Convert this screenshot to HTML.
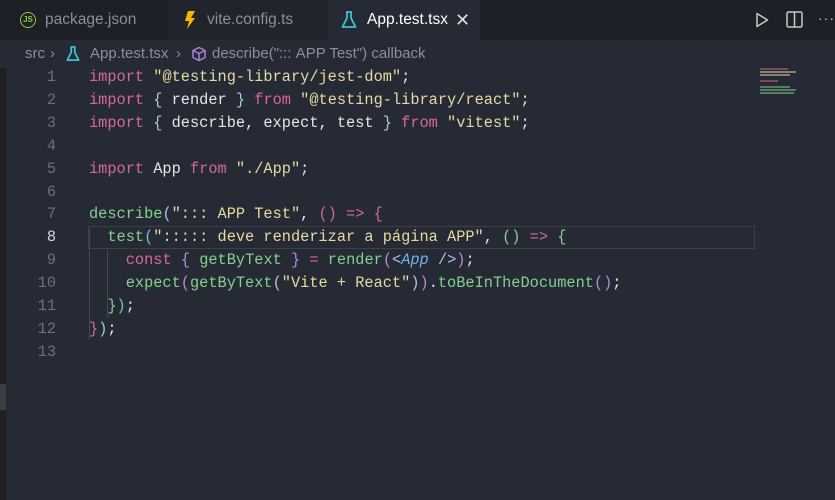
<!DOCTYPE html>
<html><head><meta charset="utf-8"><style>
*{margin:0;padding:0;box-sizing:border-box}
body{width:835px;height:500px;overflow:hidden;background:#262a35;font-family:"Liberation Sans",sans-serif;position:relative}
.tabs{position:absolute;left:0;top:0;width:835px;height:40px;background:#1d2027}
.tab{position:absolute;top:0;height:40px;color:#8b8f98;font-size:15.5px;line-height:40px}
.crumb{position:absolute;top:40px;left:0;height:28px;width:835px;color:#8b8f98;font-size:15px;line-height:28px}
.code{position:absolute;left:0;top:66px;font-family:"Liberation Mono",monospace;font-size:15.3px;line-height:22.9px;white-space:pre}
.ln{position:absolute;left:0;width:56px;text-align:right;color:#6b707b}
.ln.a{color:#d6d8dc}
.tx{position:absolute;left:89px;color:#e4e6ea}
.k{color:#d9659e}.s{color:#e3dba0}.f{color:#84d08c}.p1{color:#a9c6e0}.p2{color:#d9659e}.p3{color:#67c9c4}.p4{color:#b58ad8}.j{color:#6fb5ec;font-style:italic}.g{color:#84d08c}
</style></head><body>
<div class="tabs">
 <div class="tab" style="left:0;width:168px;background:#1d2027">
  <span style="position:absolute;left:20px;top:12px;width:16px;height:16px;border:1.5px solid #8cc84b;border-radius:50%;color:#8cc84b;font-size:8px;line-height:13px;text-align:center;font-weight:bold">JS</span>
  <span style="position:absolute;left:45px">package.json</span></div>
 <div class="tab" style="left:168px;width:160px;background:#21242b">
  <svg style="position:absolute;left:16px;top:11px" width="12" height="18" viewBox="0 0 12 18"><path d="M4 0h7L7 7h4L3 18l2-8H1z" fill="#f5b800"/></svg>
  <span style="position:absolute;left:39px">vite.config.ts</span></div>
 <div class="tab" style="left:328px;width:152px;background:#262a35;color:#fff">
  <svg style="position:absolute;left:13px;top:11px" width="16" height="18" viewBox="0 0 16 18"><path d="M5 1h6M6 1v6L1.5 16h13L10 7V1" fill="none" stroke="#3fc1d6" stroke-width="1.8" stroke-linejoin="round"/></svg>
  <span style="position:absolute;left:39px">App.test.tsx</span>
  <span style="position:absolute;left:127px;font-size:18px;color:#ddd">✕</span></div>
 <svg style="position:absolute;left:755px;top:12px" width="14" height="16" viewBox="0 0 14 16"><path d="M2 1.5v13L12.5 8z" fill="none" stroke="#c8c8c8" stroke-width="1.5" stroke-linejoin="round"/></svg>
 <svg style="position:absolute;left:786px;top:11px" width="17" height="17" viewBox="0 0 17 17"><rect x="1" y="1" width="15" height="15" rx="1.5" fill="none" stroke="#c8c8c8" stroke-width="1.5"/><path d="M8.5 1v15" stroke="#c8c8c8" stroke-width="1.5"/></svg>
 <span style="position:absolute;left:818px;top:10px;color:#c8c8c8;font-size:14px;letter-spacing:1px">···</span>
</div>
<div class="crumb">
 <span style="position:absolute;left:25px">src</span>
 <span style="position:absolute;left:50px">›</span>
 <svg style="position:absolute;left:66px;top:6px" width="14" height="16" viewBox="0 0 16 18"><path d="M5 1h6M6 1v6L1.5 16h13L10 7V1" fill="none" stroke="#3fc1d6" stroke-width="2" stroke-linejoin="round"/></svg>
 <span style="position:absolute;left:90px">App.test.tsx</span>
 <span style="position:absolute;left:176px">›</span>
 <svg style="position:absolute;left:191px;top:6px" width="16" height="16" viewBox="0 0 16 16"><path d="M8 1.5l6 3v7l-6 3-6-3v-7zM2 4.5l6 3 6-3M8 7.5v7" fill="none" stroke="#b180d7" stroke-width="1.5" stroke-linejoin="round"/></svg>
 <span style="position:absolute;left:212px">describe(":::&nbsp;APP Test") callback</span>
</div>
<div style="position:absolute;left:0;top:68px;width:6px;height:432px;background:#211f21"></div>
<div style="position:absolute;left:0;top:384px;width:6px;height:26px;background:#3a3d42"></div>
<div style="position:absolute;left:88px;top:226px;width:667px;height:23px;border:1.5px solid #3d4048"></div>
<div style="position:absolute;left:107px;top:250px;width:1px;height:68px;background:#454954"></div>
<div style="position:absolute;left:89px;top:228px;width:1px;height:112px;background:#454954"></div>
<div style="position:absolute;left:760px;top:66px;width:40px;height:30px;opacity:.5">
 <div style="height:2px;width:28px;background:#d9659e;margin-top:2px"></div>
 <div style="height:2px;width:36px;background:#e3dba0;margin-top:1px"></div>
 <div style="height:2px;width:30px;background:#e3dba0;margin-top:1px"></div>
 <div style="height:2px;width:18px;background:#d9659e;margin-top:4px"></div>
 <div style="height:2px;width:30px;background:#84d08c;margin-top:4px"></div>
 <div style="height:2px;width:36px;background:#84d08c;margin-top:1px"></div>
 <div style="height:2px;width:34px;background:#84d08c;margin-top:1px"></div>
</div>
<div class="code">
<div class="ln" style="top:0">1</div><div class="tx" style="top:0"><span class="k">import</span> <span class="s">"@testing-library/jest-dom"</span>;</div>
<div class="ln" style="top:22.9px">2</div><div class="tx" style="top:22.9px"><span class="k">import</span> <span class="p1">{</span> render <span class="p1">}</span> <span class="k">from</span> <span class="s">"@testing-library/react"</span>;</div>
<div class="ln" style="top:45.8px">3</div><div class="tx" style="top:45.8px"><span class="k">import</span> <span class="p1">{</span> describe, expect, test <span class="p1">}</span> <span class="k">from</span> <span class="s">"vitest"</span>;</div>
<div class="ln" style="top:68.7px">4</div>
<div class="ln" style="top:91.6px">5</div><div class="tx" style="top:91.6px"><span class="k">import</span> App <span class="k">from</span> <span class="s">"./App"</span>;</div>
<div class="ln" style="top:114.5px">6</div>
<div class="ln" style="top:137.4px">7</div><div class="tx" style="top:137.4px"><span class="f">describe</span><span class="p1">(</span><span class="s">"::: APP Test"</span>, <span class="p2">()</span> <span class="k">=&gt;</span> <span class="p2">{</span></div>
<div class="ln a" style="top:160.3px">8</div><div class="tx" style="top:160.3px">  <span class="f">test</span><span class="p3">(</span><span class="s">"::::: deve renderizar a página APP"</span>, <span class="g">()</span> <span class="k">=&gt;</span> <span class="g">{</span></div>
<div class="ln" style="top:183.2px">9</div><div class="tx" style="top:183.2px">    <span class="k">const</span> <span class="p4">{</span> <span class="f">getByText</span> <span class="p4">}</span> <span class="k">=</span> <span class="f">render</span><span class="p4">(</span><span class="p1">&lt;</span><span class="j">App</span> <span class="p1">/&gt;</span><span class="p4">)</span>;</div>
<div class="ln" style="top:206.1px">10</div><div class="tx" style="top:206.1px">    <span class="f">expect</span><span class="p4">(</span><span class="f">getByText</span><span class="p1">(</span><span class="s">"Vite + React"</span><span class="p1">)</span><span class="p4">)</span>.<span class="f">toBeInTheDocument</span><span class="p4">()</span>;</div>
<div class="ln" style="top:229px">11</div><div class="tx" style="top:229px">  <span class="g">}</span><span class="p3">)</span>;</div>
<div class="ln" style="top:251.9px">12</div><div class="tx" style="top:251.9px"><span class="p2">}</span><span class="p1">)</span>;</div>
<div class="ln" style="top:274.8px">13</div>
</div>
</body></html>
